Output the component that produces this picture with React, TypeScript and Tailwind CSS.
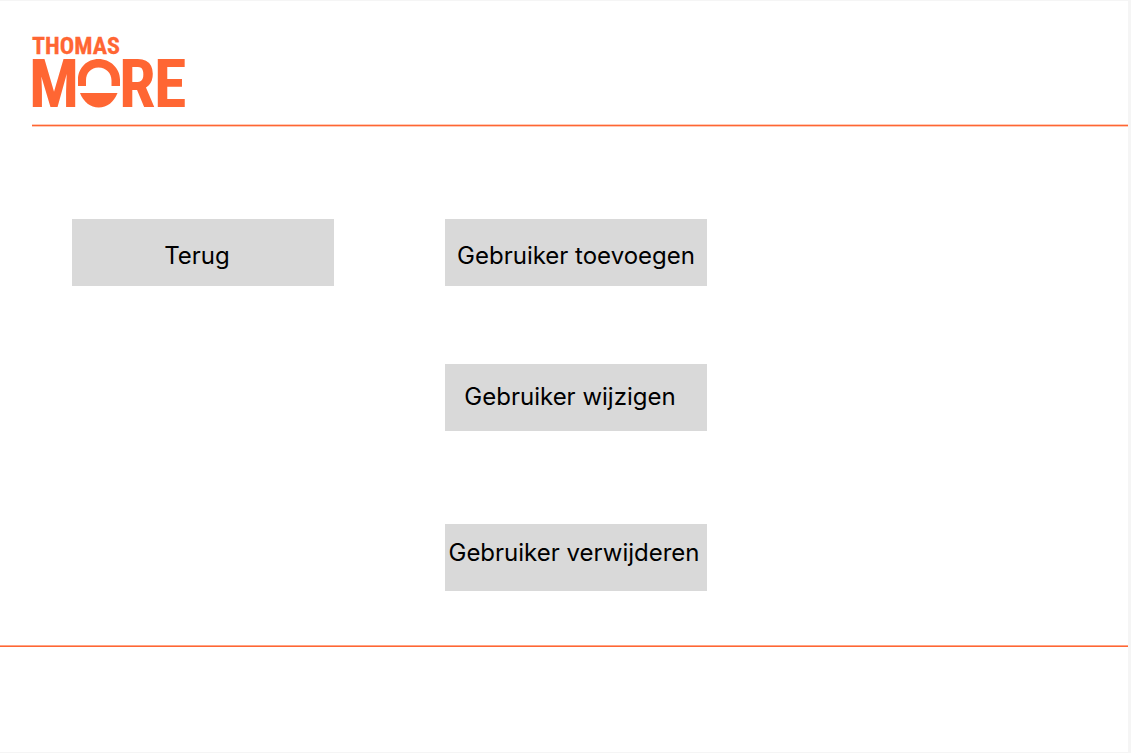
function Logo() {
  return (
    <svg className="block h-[104px] w-[180px]" viewBox="-8 -16 180 104" fill="#ff6633" role="img" aria-label="Thomas More">
      <g fontWeight="700" fontFamily="'Roboto Condensed', Roboto, sans-serif">
        <text x="0" y="18" fontSize="24" stroke="#ff6633" strokeWidth="0.3">THOMAS</text>
        <g fontSize="66">
          <text x="-3" y="71">M</text>
          <text x="87" y="71">R</text>
          <text x="122" y="71">E</text>
        </g>
      </g>
      <path d="M46 50V43.500C46 32 55 23 66.500 23S88 32 88 43.500V50H79.500V44.500C79.500 37 74 31.500 66.500 31.500S54 37 54 44.500V50Z" />
      <path d="M48 57H85.500C82 66 75 71.500 66.700 71.500S51.500 66 48 57Z" />
    </svg>
  );
}

const actionClass =
  "block h-[67px] w-[262px] cursor-pointer whitespace-nowrap bg-[#d9d9d9] text-2xl text-black";

export default function App() {
  return (
    <div className="min-h-screen bg-[#f5f5f5] py-px pr-[3px] font-['Inter','Liberation_Sans',sans-serif]">
      <div className="flex min-h-[calc(100vh-2px)] flex-col bg-white">
        <header className="pl-6 pt-[19px]">
          <Logo />
          <div className="ml-2 h-[3px] border-y border-[#ffc9b6] bg-[#ff6633]" />
        </header>
        <main className="flex items-start gap-[111px] pb-[54px] pl-[72px] pt-[92px]">
          <button type="button" className={`${actionClass} pr-3 pt-1.5`}>
            Terug
          </button>
          <div className="flex flex-col">
            <button type="button" className={`${actionClass} pt-1.5`}>
              Gebruiker toevoegen
            </button>
            <button type="button" className={`${actionClass} mt-[78px] pb-0.5 pr-3`}>
              Gebruiker wijzigen
            </button>
            <button type="button" className={`${actionClass} mt-[93px] pb-2.5 pr-1`}>
              Gebruiker verwijderen
            </button>
          </div>
        </main>
        <footer className="h-0.5 border-t border-[#ffa385] bg-[#ff6633]" />
      </div>
    </div>
  );
}
